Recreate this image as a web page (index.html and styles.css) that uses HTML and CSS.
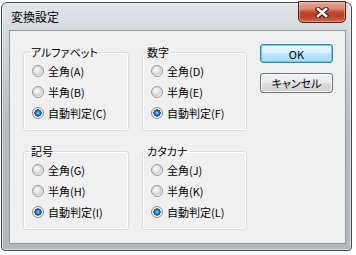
FILE: index.html
```html
<!DOCTYPE html>
<html lang="ja">
<head>
<meta charset="utf-8">
<title>変換設定</title>
<link rel="stylesheet" href="styles.css">
</head>
<body>
<div class="window">
  <div class="titlebar">
    <span class="title">変換設定</span>
    <div class="close" aria-label="閉じる">
      <svg width="14" height="11" viewBox="0 0 14 11">
        <path d="M3 2 L11 9 M11 2 L3 9" stroke="#3b1a12" stroke-width="4.6" stroke-linecap="square" fill="none"/>
        <path d="M3 2 L11 9 M11 2 L3 9" stroke="#ffffff" stroke-width="2.6" stroke-linecap="square" fill="none"/>
      </svg>
    </div>
  </div>
  <div class="client">
    <div class="groups">
      <fieldset class="grp">
        <legend>アルファベット</legend>
        <label class="opt"><span class="radio"></span>全角(A)</label>
        <label class="opt"><span class="radio"></span>半角(B)</label>
        <label class="opt"><span class="radio on"></span>自動判定(C)</label>
      </fieldset>
      <fieldset class="grp grp-r">
        <legend>数字</legend>
        <label class="opt"><span class="radio"></span>全角(D)</label>
        <label class="opt"><span class="radio"></span>半角(E)</label>
        <label class="opt"><span class="radio on"></span>自動判定(F)</label>
      </fieldset>
      <fieldset class="grp">
        <legend>記号</legend>
        <label class="opt"><span class="radio"></span>全角(G)</label>
        <label class="opt"><span class="radio"></span>半角(H)</label>
        <label class="opt"><span class="radio on"></span>自動判定(I)</label>
      </fieldset>
      <fieldset class="grp grp-r">
        <legend>カタカナ</legend>
        <label class="opt"><span class="radio"></span>全角(J)</label>
        <label class="opt"><span class="radio"></span>半角(K)</label>
        <label class="opt"><span class="radio on"></span>自動判定(L)</label>
      </fieldset>
    </div>
    <div class="buttons">
      <div class="btn btn-default">OK</div>
      <div class="btn btn-cancel">キャンセル</div>
    </div>
  </div>
</div>
</body>
</html>
```
FILE: styles.css
```css
html, body {
  margin: 0;
  padding: 0;
  background: #ffffff;
}
body {
  font-family: "Noto Sans CJK JP", "Noto Sans", sans-serif;
  font-size: 11px;
  color: #000;
  font-feature-settings: "palt";
}
.window {
  box-sizing: border-box;
  width: 351px;
  height: 249px;
  margin: 2px 0 0 1px;
  border: 1px solid #43474b;
  border-radius: 6px 6px 4px 4px;
  background: linear-gradient(to bottom, #e1e5ea 0, #d6dbe0 24px, #c9ced3 60px, #b9bdc2 120px, #b4b8bc 100%);
  display: flex;
  flex-direction: column;
  box-shadow: inset 0 0 0 1px rgba(255,255,255,0.55);
}
.titlebar {
  height: 27px;
  display: flex;
  align-items: center;
  padding-left: 9px;
  flex: none;
}
.title {
  font-size: 12px;
  line-height: 16px;
  margin-top: 1px;
}
.close {
  margin-left: auto;
  margin-right: 5px;
  align-self: flex-start;
  margin-top: -2px;
  box-sizing: border-box;
  width: 48px;
  height: 22px;
  border: 1px solid #4e2016;
  border-radius: 0 0 5px 5px;
  background: linear-gradient(to bottom, #e6a898 0, #d98670 35%, #c3482d 50%, #bd3f24 70%, #d2694c 100%);
  box-shadow: inset 0 0 0 1px rgba(255,210,190,0.45);
  display: flex;
  align-items: center;
  justify-content: center;
}
.close svg {
  display: block;
  margin-top: 1px;
}
.client {
  flex: 1;
  margin: 0 5px 6px 7px;
  border: 1px solid #8d959d;
  background: #f0f0f0;
  display: flex;
  align-items: flex-start;
  gap: 13px;
  padding: 13px 0 0 13px;
}
.groups {
  margin-top: 1px;
  display: grid;
  grid-template-columns: 106px 105px;
  column-gap: 13px;
  row-gap: 13px;
}
.grp {
  margin: 0;
  min-width: 0;
  padding: 2px 8px 7px 8px;
  border: 1px solid #d5dfe5;
  border-radius: 3px;
  box-shadow: inset 0 0 0 1px #ffffff;
}
.grp legend {
  padding: 0 1px;
  margin-left: -2px;
  line-height: 14px;
  font-size: 11px;
}
.grp-r legend {
  margin-left: -5px;
}
.opt {
  display: flex;
  align-items: center;
  gap: 4px;
  height: 20px;
  line-height: 14px;
  white-space: nowrap;
}
.opt + .opt {
  margin-top: 1px;
}
.radio {
  box-sizing: border-box;
  width: 12px;
  height: 12px;
  flex: none;
  border-radius: 50%;
  border: 1px solid #989a9c;
  background: radial-gradient(circle at 40% 38%, #fbfbfb 0, #eeeeee 2px, #dcdcdc 4px, #cfcfcf 5px, #f6f6f6 6px);
}
.radio.on {
  border-color: #8a8c8e;
  background: radial-gradient(circle at 50% 50%, #9fe0ff 0, #39a2e6 1.3px, #11579b 2.9px, #0c3b6e 3.4px, #ffffff 3.9px, #f0f0f0 5px);
}
.buttons {
  display: flex;
  flex-direction: column;
  width: 73px;
}
.btn {
  box-sizing: border-box;
  height: 20px;
  border: 1px solid #707070;
  border-radius: 3px;
  display: flex;
  align-items: center;
  justify-content: center;
  line-height: 14px;
  background: linear-gradient(to bottom, #f2f2f2 0, #ebebeb 50%, #dddddd 50%, #cfcfcf 100%);
  box-shadow: inset 0 0 0 1px rgba(255,255,255,0.75);
}
.btn-default {
  height: 19px;
  border-color: #3c7fb1;
  background: linear-gradient(to bottom, #eaf6fd 0, #d9f0fc 50%, #bee6fd 50%, #a7d9f5 100%);
  box-shadow: inset 0 0 0 1px #5fd2fb;
}
.btn-cancel {
  margin-top: 10px;
}
```
